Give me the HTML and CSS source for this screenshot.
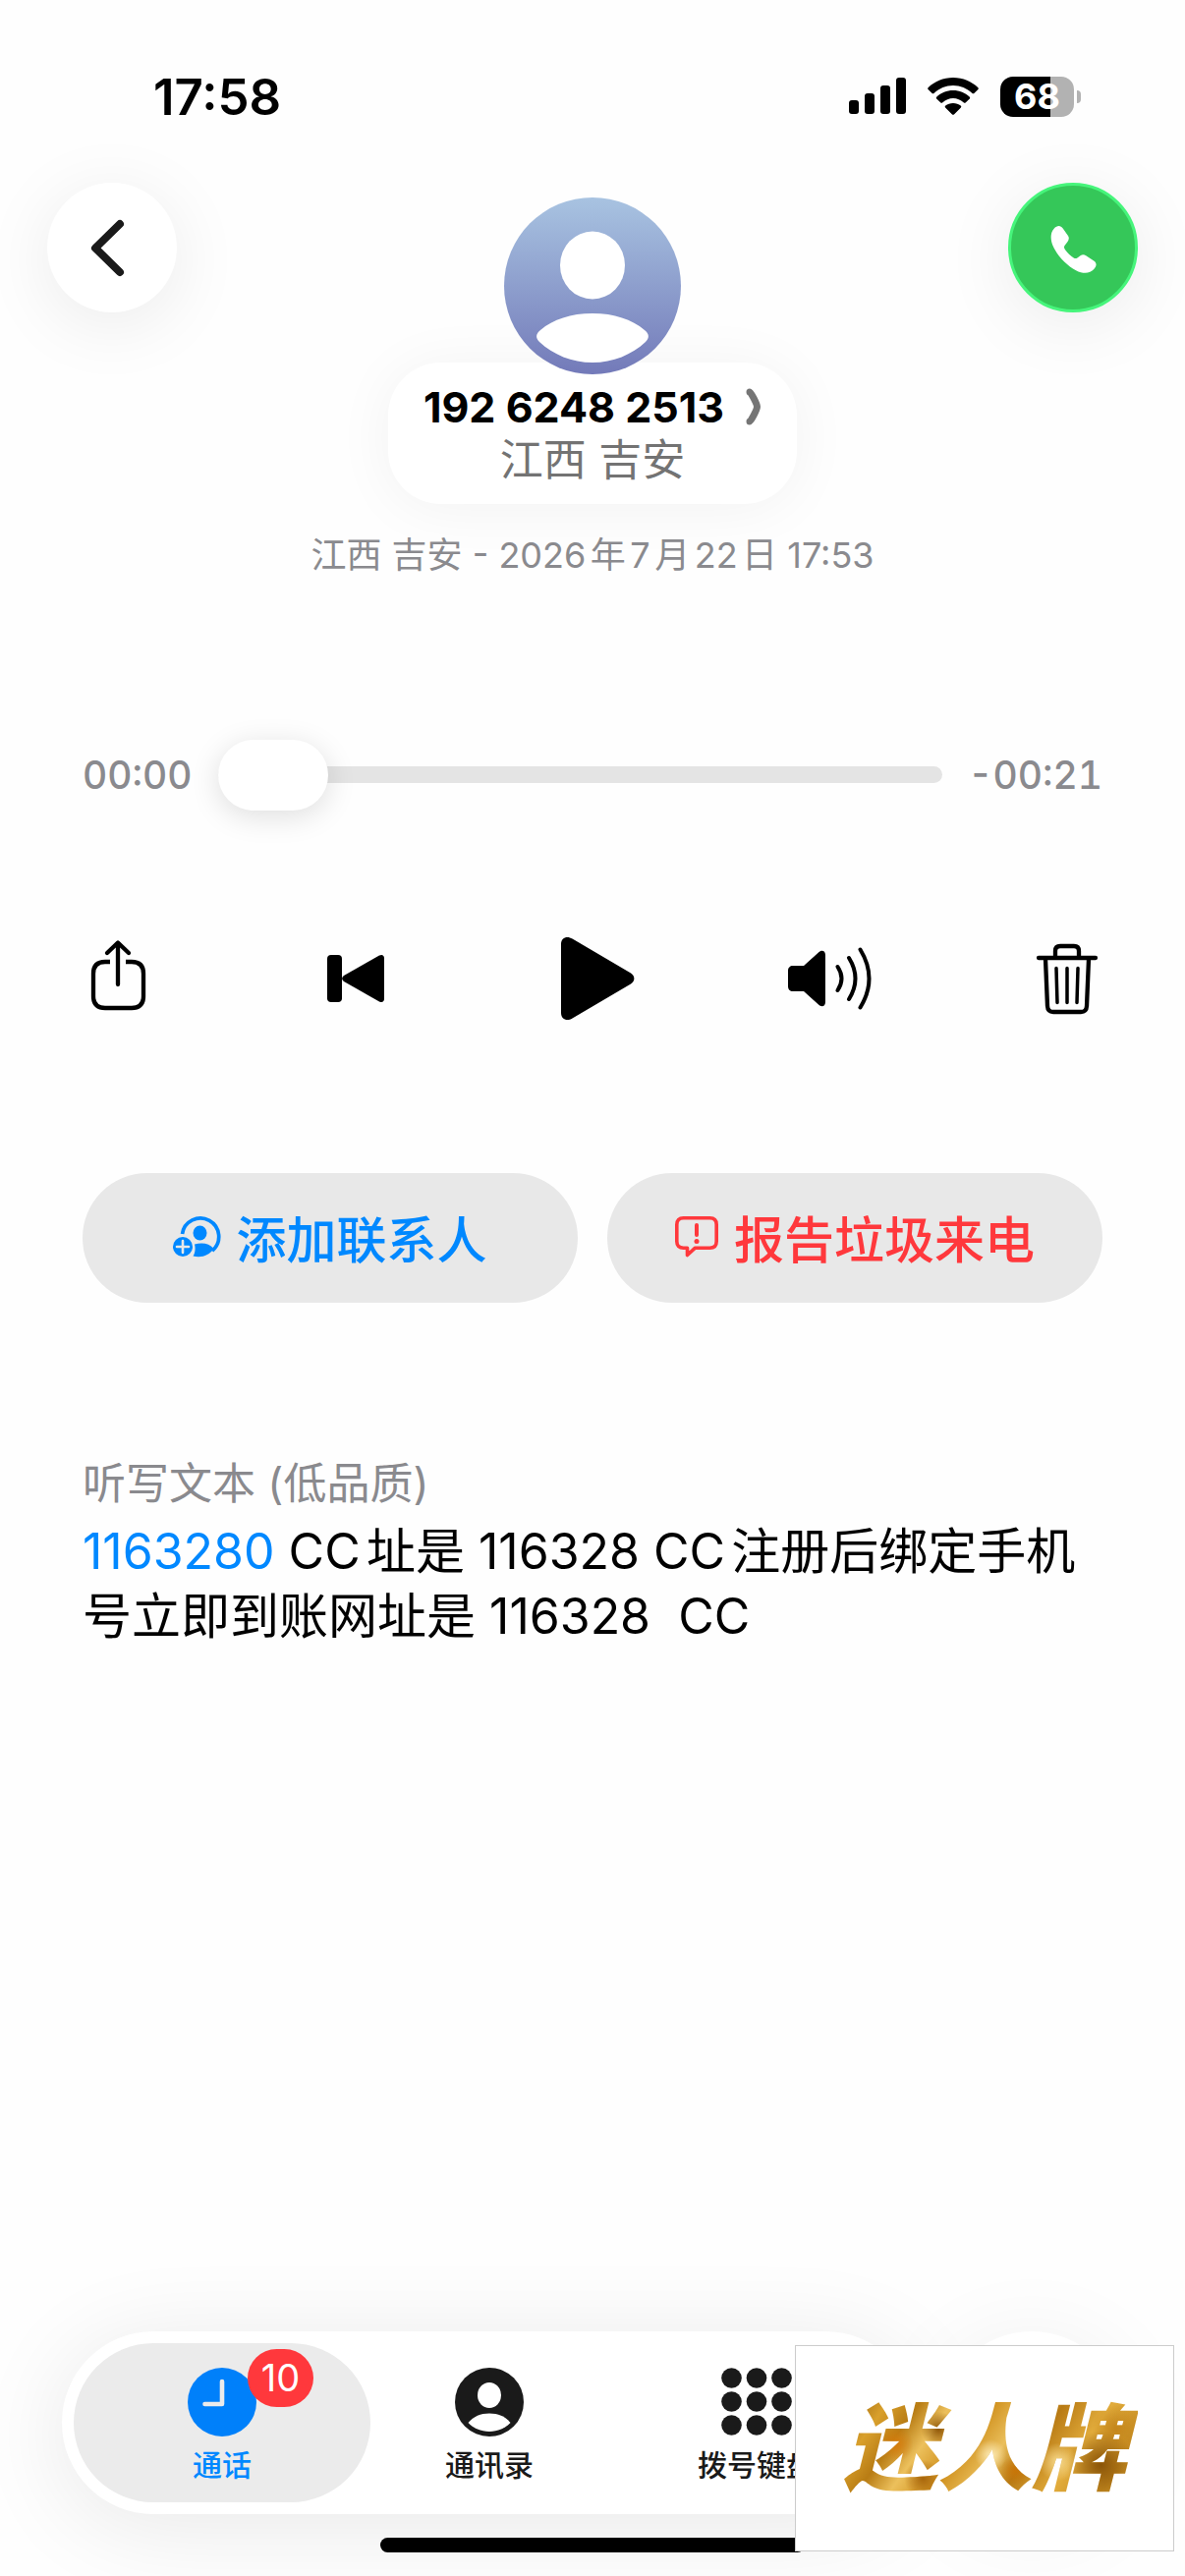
FILE: index.html
```
<!DOCTYPE html>
<html lang="zh-CN">
<head>
<meta charset="utf-8">
<meta name="viewport" content="width=device-width">
<title>通话</title>
<link rel="stylesheet" href="styles.css">
</head>
<body>
<div class="screen">
  <div class="status-bar">
    <time class="clock">17:58</time>
    <div class="status-icons">
      <svg class="signal" viewBox="0 0 58 38" aria-hidden="true"><rect x="0" y="23" width="10" height="14" rx="3"/><rect x="16" y="16" width="10" height="21" rx="3"/><rect x="32" y="8" width="10" height="29" rx="3"/><rect x="48" y="0" width="10" height="37" rx="3"/></svg>
      <svg class="wifi" viewBox="0 0 52 38" aria-hidden="true"><path d="M26 0C16 0 7 4 .8 10c-.8.8-.8 1.500 0 2.300l3.600 3.400c.8.800 1.500.8 2.300 0C12 11 18.500 8 26 8s14 3 19.300 7.700c.8.800 1.500.8 2.300 0l3.600-3.400c.8-.8.8-1.500 0-2.300C45 4 36 0 26 0z"/><path d="M26 13c-6.500 0-12.300 2.500-16.600 6.400-.8.8-.8 1.500 0 2.300l3.700 3.500c.8.800 1.500.7 2.300 0C18.300 22.700 22 21 26 21s7.700 1.700 10.600 4.200c.8.700 1.500.8 2.300 0l3.700-3.500c.8-.8.8-1.500 0-2.300C38.300 15.500 32.500 13 26 13z"/><path d="M26 26c-3 0-5.700 1-7.700 2.600-.8.700-.8 1.400 0 2.200l6.500 6.400c.8.800 1.600.8 2.400 0l6.500-6.400c.8-.8.8-1.500 0-2.200C31.700 27 29 26 26 26z"/></svg>
      <div class="battery"><span class="battery-level">68</span></div>
    </div>
  </div>

  <header class="header">
    <button class="round-button" type="button" aria-label="返回">
      <svg viewBox="0 0 132 132" aria-hidden="true"><path d="M74 42 49 66.500 74 91" fill="none" stroke="#1a1a1a" stroke-width="8" stroke-linecap="round" stroke-linejoin="round"/></svg>
    </button>
    <div class="contact">
      <svg class="avatar" viewBox="0 0 180 180" aria-hidden="true">
        <defs><linearGradient id="sky" x1="0" y1="0" x2="0" y2="1"><stop offset="0" stop-color="#a8c3e1"/><stop offset="1" stop-color="#737ab9"/></linearGradient></defs>
        <circle cx="90" cy="90" r="90" fill="url(#sky)"/>
        <ellipse cx="90" cy="69" rx="33" ry="34.500" fill="#fff"/>
        <path d="M90 118c22 0 40 6 53 17 5 4 5 8 1 12-14 13-33 21-54 21s-40-8-54-21c-4-4-4-8 1-12 13-11 31-17 53-17z" fill="#fff"/>
      </svg>
      <button class="contact-card" type="button">
        <span class="contact-number">192 6248 2513
          <svg class="chevron" viewBox="0 0 16 38" aria-hidden="true"><path d="M4 4c1 0 7.500 12 7.500 15S5 34 4 34" fill="none" stroke="#757575" stroke-width="7" stroke-linecap="round" stroke-linejoin="round"/></svg>
        </span>
        <span class="contact-place">江西 吉安</span>
      </button>
    </div>
    <button class="round-button call" type="button" aria-label="呼叫">
      <svg viewBox="0 0 132 132" aria-hidden="true"><path fill="#fff" d="M46 46.500c4-4.500 8-4 10.500-.5l6 8.500c1.500 2.500 1 4.500-.5 7l-3.300 4c-1 1.400-1 2.600-.2 4 2.500 4 6.500 8 10.500 10.500 1.500.9 2.800.9 4.200 0l3.500-2.400c2.300-1.400 4.300-1.400 6.600 0l9 6c3.500 2.300 3.500 5.500.3 9.400-5 5.500-12.500 6-21 1.500C61 89 50 78 44.500 65 42 58 42 51 46 46.500z" transform="translate(6 6) scale(.88)"/></svg>
    </button>
  </header>

  <main class="content">
    <p class="call-date">江西 吉安 - 2026年7月22日 17:53</p>

    <div class="scrubber">
      <span class="scrub-time">00:00</span>
      <input class="scrub-range" type="range" min="0" max="21" value="0" aria-label="播放进度">
      <span class="scrub-time">-00:21</span>
    </div>

    <div class="controls">
      <button class="control" type="button" aria-label="共享"><svg viewBox="0 0 96 96" aria-hidden="true"><g fill="none" stroke="#000" stroke-width="4.300" stroke-linecap="round" stroke-linejoin="round"><path d="M48 12v42M37 22l11-10.500L59 22"/><path stroke-linecap="butt" d="M40 31h-5c-8 0-12 4-12 12v23c0 8 4 12 12 12h27c8 0 12-4 12-12V43c0-8-4-12-12-12h-6"/></g></svg></button>
      <button class="control" type="button" aria-label="从头播放"><svg viewBox="0 0 96 96" aria-hidden="true"><rect x="19" y="24" width="15" height="48" rx="4"/><path d="M72 24.500c3-1.500 5 0 5 3v41c0 3-2 4.500-5 3L36 51c-2.500-2-2.500-4 0-6z"/></svg></button>
      <button class="control" type="button" aria-label="播放"><svg viewBox="0 0 96 96" aria-hidden="true"><path d="M16 13c0-6.500 6-9 11.500-5.500l59.500 35c4.500 3 4.500 8 0 11l-59.500 35C22 92 16 89.500 16 83z"/></svg></button>
      <button class="control" type="button" aria-label="扬声器"><svg viewBox="0 0 96 96" aria-hidden="true"><path d="M5 40c0-3 2-5 5-5h11l15-13.500C39 18.500 43 19.500 43 24v48c0 4.500-4 5.500-7 2.500L21 61H10c-3 0-5-2-5-5z"/><g fill="none" stroke="#000" stroke-width="4" stroke-linecap="round"><path d="M55.500 36q8 12 0 24M67 27q13 21 0 42M78.500 18.500q18 29.500 0 59"/></g></svg></button>
      <button class="control" type="button" aria-label="删除"><svg viewBox="0 0 96 96" aria-hidden="true"><g fill="none" stroke="#000" stroke-width="4.300" stroke-linecap="round" stroke-linejoin="round"><path d="M19 27h58M36 27v-7q0-5 5-5h14q5 0 5 5v7M26 28l2 48q.3 6 6 6h28q5.700 0 6-6l2-48"/><path stroke-width="3.500" d="M37 37.500l1 35M48 37.500v35M59 37.500l-1 35"/></g></svg></button>
    </div>

    <div class="actions">
      <button class="action add" type="button">
        <svg viewBox="0 0 48 42" aria-hidden="true"><path d="M9.500 18A18.700 18.700 0 1 1 40 35" fill="none" stroke="currentColor" stroke-width="3.700"/><ellipse cx="27.500" cy="17" rx="7" ry="7.500" fill="currentColor"/><path fill="currentColor" d="M22 28.500c8-2 15-1 19.500 4.500C37 40 29 42.500 20.500 40.500c2-3 2.700-8 1.500-12z"/><circle cx="10" cy="31" r="10" fill="currentColor"/><path d="M10 25v12M4 31h12" stroke="#e8e8e8" stroke-width="2.600" stroke-linecap="round"/></svg>
        添加联系人
      </button>
      <button class="action report" type="button">
        <svg viewBox="0 0 44 42" aria-hidden="true"><path d="M8.500 1.800h27q6.700 0 6.700 6.700v17q0 6.700-6.700 6.700H20.500L12.500 39.500V32.200h-4q-6.700 0-6.700-6.700v-17q0-6.700 6.700-6.700z" fill="none" stroke="currentColor" stroke-width="3.600" stroke-linejoin="round"/><path d="M22 9v10" stroke="currentColor" stroke-width="4" stroke-linecap="round"/><circle cx="22" cy="25.500" r="2.500" fill="currentColor"/></svg>
        报告垃圾来电
      </button>
    </div>

    <section class="transcript">
      <h2 class="transcript-title">听写文本 (低品质)</h2>
      <p class="transcript-body"><a href="tel:1163280">1163280</a> CC址是 116328 CC注册后绑定手机号立即到账网址是 116328&nbsp; CC</p>
    </section>
  </main>

  <footer class="dock">
    <nav class="tab-bar" aria-label="标签栏">
      <a class="tab active" href="#calls" aria-current="page">
        <span class="tab-icon">
          <svg viewBox="0 0 70 70" aria-hidden="true"><circle cx="35" cy="35" r="35" fill="#0080fa"/><path d="M35 14v23H17.500" fill="none" stroke="#ebebeb" stroke-width="4.600" stroke-linecap="round" stroke-linejoin="round"/></svg>
          <span class="badge">10</span>
        </span>
        通话
      </a>
      <a class="tab" href="#contacts">
        <span class="tab-icon"><svg viewBox="0 0 70 70" aria-hidden="true"><circle cx="35" cy="35" r="35" fill="#1a1a1a"/><ellipse cx="35" cy="28" rx="12" ry="13" fill="#fff"/><path d="M35 46.500c9 0 16 3 21.500 9.500-5 5.500-13 9-21.500 9s-16.500-3.500-21.500-9C19 49.500 26 46.500 35 46.500z" fill="#fff"/></svg></span>
        通讯录
      </a>
      <a class="tab" href="#keypad">
        <span class="tab-icon"><svg viewBox="0 0 70 70" aria-hidden="true"><g fill="#1a1a1a"><circle cx="9.500" cy="10.500" r="10.300"/><circle cx="35" cy="10.500" r="10.300"/><circle cx="60.500" cy="10.500" r="10.300"/><circle cx="9.500" cy="34.500" r="10.300"/><circle cx="35" cy="34.500" r="10.300"/><circle cx="60.500" cy="34.500" r="10.300"/><circle cx="9.500" cy="58.500" r="10.300"/><circle cx="35" cy="58.500" r="10.300"/><circle cx="60.500" cy="58.500" r="10.300"/></g></svg></span>
        拨号键盘
      </a>
    </nav>
    <button class="search" type="button" aria-label="搜索"></button>
    <div class="home-indicator"></div>
  </footer>

  <div class="stamp"><span class="stamp-text">迷人牌</span></div>
</div>
</body>
</html>
```
FILE: styles.css
```
* {
  box-sizing: border-box;
}

body {
  margin: 0;
  background: #fefefe;
  color: #000;
  font-family: Inter, "Noto Sans CJK SC", sans-serif;
  text-autospace: normal;
}

button {
  margin: 0;
  padding: 0;
  border: 0;
  background: none;
  color: inherit;
  font: inherit;
}

a {
  color: inherit;
  text-decoration: none;
}

svg {
  display: block;
  overflow: visible;
}

.screen {
  position: relative;
  display: flex;
  flex-direction: column;
  min-height: 100vh;
  overflow: hidden;
}

/* Status bar */

.status-bar {
  display: flex;
  justify-content: space-between;
  align-items: center;
  height: 186px;
  padding: 10px 106px 0 156px;
}

.clock {
  font-size: 51px;
  font-weight: 600;
}

.status-icons {
  display: flex;
  align-items: center;
  gap: 22px;
}

.signal {
  width: 58px;
  height: 38px;
}

.wifi {
  width: 52px;
  height: 38px;
}

.battery {
  position: relative;
  width: 75px;
  height: 41px;
  margin: 0 7px 0 16px;
  margin-left: 0;
}

.battery-level {
  display: block;
  border-radius: 13px;
  background: linear-gradient(to right, #000 51px, #b2b2b2 51px);
  color: #fff;
  font-size: 36px;
  font-weight: 700;
  line-height: 41px;
  text-align: center;
}

.battery::after {
  content: "";
  position: absolute;
  top: 14px;
  right: -7px;
  width: 4px;
  height: 13px;
  border-radius: 0 4px 4px 0;
  background: #b2b2b2;
}

/* Header */

.header {
  display: flex;
  justify-content: space-between;
  align-items: flex-start;
  padding: 0 48px;
}

.round-button {
  width: 132px;
  height: 132px;
  border-radius: 50%;
  background: #fff;
  box-shadow: 0 12px 72px rgba(0, 0, 0, 0.08);
}

.round-button.call {
  border: 3px solid #46f57b;
  background: #35c759;
}

.round-button.call svg {
  margin: -3px;
}

.contact {
  display: flex;
  flex-direction: column;
  align-items: center;
  padding-top: 15px;
}

.avatar {
  z-index: 1;
  width: 180px;
  height: 180px;
  margin-bottom: -12px;
}

.contact-card {
  display: flex;
  flex-direction: column;
  align-items: center;
  height: 144px;
  padding: 18px 36px 0;
  border-radius: 54px;
  background: #fff;
  box-shadow: 0 4px 60px rgba(0, 0, 0, 0.05);
}

.contact-number {
  display: flex;
  align-items: center;
  gap: 22px;
  font-size: 43px;
  font-weight: 700;
  line-height: 54px;
}

.chevron {
  width: 16px;
  height: 38px;
}

.contact-place {
  color: #737373;
  font-size: 44px;
  line-height: 54px;
}

/* Call details */

.content {
  padding: 0 84px;
}

.call-date {
  margin: 28px 0 0;
  color: #8a8a8e;
  font-size: 36px;
  line-height: 48px;
  text-align: center;
}

.scrubber {
  display: flex;
  align-items: center;
  gap: 26px;
  height: 72px;
  margin-top: 163px;
}

.scrub-time {
  color: #8a8a8e;
  font-size: 39px;
  font-weight: 500;
  font-variant-numeric: tabular-nums;
}

.scrub-range {
  flex: 1;
  min-width: 0;
  height: 72px;
  margin: 0;
  appearance: none;
  background: none;
}

.scrub-range::-webkit-slider-runnable-track {
  height: 17px;
  border-radius: 9px;
  background: #e4e4e4;
}

.scrub-range::-webkit-slider-thumb {
  appearance: none;
  width: 112px;
  height: 72px;
  margin-top: -27px;
  border-radius: 36px;
  background: #fff;
  box-shadow: 0 6px 30px rgba(0, 0, 0, 0.13);
}

.controls {
  display: flex;
  justify-content: space-between;
  margin: 124px -12px 0;
}

.control {
  width: 96px;
  height: 96px;
}

.actions {
  display: grid;
  grid-template-columns: 1fr 1fr;
  gap: 30px;
  margin-top: 150px;
}

.action {
  display: flex;
  justify-content: center;
  align-items: center;
  gap: 16px;
  height: 132px;
  padding-bottom: 3px;
  border-radius: 66px;
  background: #e8e8e8;
  font-size: 51px;
  font-weight: 500;
}

.action svg {
  height: 42px;
}

.add {
  color: #08f;
}

.report {
  color: #ff383c;
}

.transcript {
  margin-top: 154px;
}

.transcript-title {
  margin: 0;
  color: #8a8a8e;
  font-size: 44px;
  font-weight: 400;
  line-height: 60px;
}

.transcript-body {
  margin: 6px 0 0;
  font-size: 50px;
  line-height: 66px;
}

.transcript-body a {
  color: #08f;
}

/* Bottom dock */

.dock {
  display: grid;
  grid-template-columns: 1fr 186px;
  gap: 24px;
  margin-top: auto;
  padding: 0 63px 24px;
}

.tab-bar {
  display: grid;
  grid-template-columns: repeat(3, 1fr);
  padding: 12px 27px;
  border-radius: 93px;
  background: #fff;
  box-shadow: 0 12px 96px rgba(0, 0, 0, 0.09);
}

.tab {
  display: flex;
  flex-direction: column;
  align-items: center;
  height: 162px;
  margin: 0 -15px;
  padding-top: 25px;
  border-radius: 81px;
  color: #1a1a1a;
  font-size: 30px;
  font-weight: 500;
  line-height: 54px;
}

.tab.active {
  background: #ebebeb;
  color: #08f;
}

.tab-icon {
  position: relative;
  width: 70px;
  height: 70px;
  margin-bottom: 2px;
}

.badge {
  position: absolute;
  top: -19px;
  left: 61px;
  width: 67px;
  border-radius: 30px;
  background: #ff383c;
  color: #fff;
  font-size: 38px;
  font-weight: 400;
  line-height: 59px;
  text-align: center;
}

.search {
  height: 186px;
  border-radius: 50%;
  background: #fff;
  box-shadow: 0 12px 96px rgba(0, 0, 0, 0.07);
}

.home-indicator {
  grid-column: 1 / -1;
  justify-self: center;
  width: 40%;
  min-width: 432px;
  height: 15px;
  border-radius: 8px;
  background: #000;
}

/* Gold lettering on a bordered card, laid over the dock */

.stamp {
  position: absolute;
  right: 11px;
  bottom: 25px;
  display: flex;
  justify-content: center;
  align-items: center;
  width: 386px;
  height: 210px;
  border: 1px solid #ccc;
  background: #fff;
}

.stamp-text {
  padding: 0 12px;
  background:
    radial-gradient(circle at 21% 47%, #d67c0c 0, transparent 7%),
    radial-gradient(circle at 35% 36%, #8f5608 0, transparent 8%),
    radial-gradient(circle at 30% 72%, #a8660c 0, transparent 8%),
    radial-gradient(circle at 52% 55%, #fbe9b4 0, transparent 9%),
    radial-gradient(circle at 60% 66%, #c87508 0, transparent 7%),
    radial-gradient(circle at 74% 60%, #f6d98c 0, transparent 8%),
    radial-gradient(circle at 88% 62%, #8a5408 0, transparent 12%),
    radial-gradient(circle at 93% 36%, #c4861c 0, transparent 8%),
    linear-gradient(125deg, #9a640e 8%, #d9a02c 18%, #b87c14 26%, #ecc05c 34%, #cf8f1c 44%, #eabf5c 54%, #b87a14 62%, #e2ac3c 74%, #c48a20 86%, #d8a232 100%);
  background-clip: text;
  -webkit-background-clip: text;
  color: transparent;
  font-size: 96px;
  font-style: italic;
  font-weight: 900;
  line-height: 140px;
}
```
